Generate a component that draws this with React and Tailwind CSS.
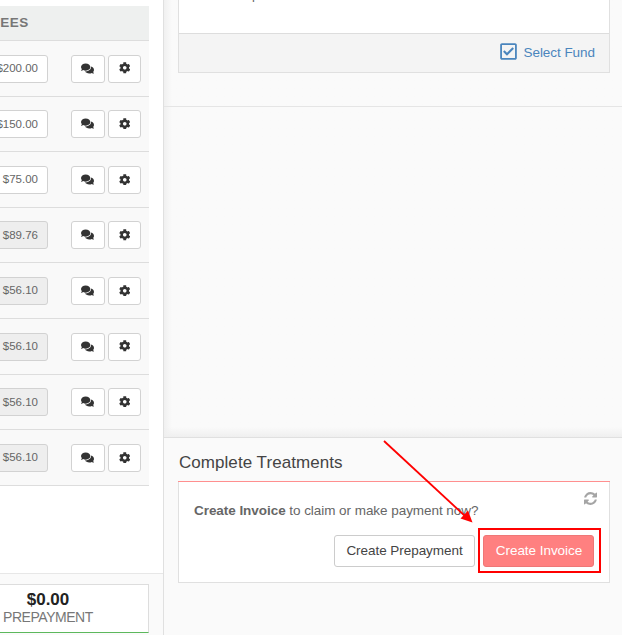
import { FaComments, FaCog, FaRegCheckSquare } from "react-icons/fa";

const fees = [
  { amount: "$200.00", locked: false },
  { amount: "$150.00", locked: false },
  { amount: "$75.00", locked: false },
  { amount: "$89.76", locked: true },
  { amount: "$56.10", locked: true },
  { amount: "$56.10", locked: true },
  { amount: "$56.10", locked: true },
  { amount: "$56.10", locked: true },
];

function FeeRow({ amount, locked }) {
  return (
    <div className="flex h-[55.6px] items-center border-b border-[#dddddd] bg-[#f9f9f9] pt-[0.7px]">
      <div
        className={`flex h-7 w-[58px] -ml-2.5 shrink-0 items-center justify-end rounded-[3px] border border-[#d2d2d2] pr-[9px] text-[11.5px] text-[#666666] ${locked ? "bg-[#eeeeee]" : "bg-white"}`}
      >
        {amount}
      </div>
      <button className="ml-[23px] flex h-[28px] w-[34px] shrink-0 items-center justify-center rounded-[3px] border border-[#d2d2d2] bg-white pb-px pr-px text-[#333333]">
        <FaComments className="size-[13px]" />
      </button>
      <button className="ml-[3px] flex h-[28px] w-[33px] shrink-0 items-center justify-center rounded-[3px] border border-[#d2d2d2] bg-white pb-px text-[#333333]">
        <FaCog className="size-[11.5px]" />
      </button>
    </div>
  );
}

function RefreshIcon({ className }) {
  return (
    <svg className={className} viewBox="0 0 1536 1536" fill="currentColor">
      <path d="M1511 928q0 5-1 7-64 268-268 434.5t-478 166.5q-146 0-282.500-55t-243.500-157l-129 129q-19 19-45 19t-45-19-19-45v-448q0-26 19-45t45-19h448q26 0 45 19t19 45-19 45l-137 137q71 66 161 102t187 36q134 0 250-65t186-179q11-17 53-117 8-23 30-23h192q13 0 22.500 9.500t9.500 22.500zm25-800v448q0 26-19 45t-45 19h-448q-26 0-45-19t-19-45 19-45l138-138q-148-137-349-137-134 0-250 65t-186 179q-11 17-53 117-8 23-30 23h-199q-13 0-22.500-9.500t-9.500-22.500v-7q65-268 270-434.500t480-166.500q146 0 284 55.500t245 156.500l130-129q19-19 45-19t45 19 19 45z" />
    </svg>
  );
}

export default function App() {
  return (
    <div className="relative flex h-[635px] w-[622px] overflow-hidden bg-[#fafafa] font-['Liberation_Sans',Arial,sans-serif]">
      <div className="flex w-[163px] shrink-0 flex-col bg-white pt-1.5">
        <div className="w-[149px]">
          <div className="flex h-[35px] items-center overflow-hidden border-b border-[#dddddd] bg-[#eef0ef]">
            <span className="-ml-[8.5px] text-[13.5px] font-bold tracking-[0.5px] text-[#777777]">FEES</span>
          </div>
          {fees.map((fee, i) => (
            <FeeRow key={i} {...fee} />
          ))}
        </div>
        <div className="mt-auto h-[62px] border-t border-[#e7e7e7] bg-[#fafafa] pt-2.5">
          <div className="flex h-[49px] w-[149px] flex-col border-r border-t border-b border-t-[#dddddd] border-r-[#dddddd] border-b-[#5cb85c] bg-white pt-[5px]">
            <div className="w-24 text-center text-[17px] font-bold leading-[19px] text-[#222222]">$0.00</div>
            <div className="pl-[3px] text-[14px] leading-[17px] tracking-[-0.45px] text-[#777777]">PREPAYMENT</div>
          </div>
        </div>
      </div>

      <div className="flex flex-1 flex-col border-l border-[#e0e0e0]">
        <div className="flex h-[437px] flex-col bg-linear-to-r from-[#f0f0f0] to-[#fafafa] to-[8px]">
          <div className="h-[107px] border-b border-[#e5e5e5]">
            <div className="ml-3.5 flex h-[73px] w-[432px] flex-col border-x border-b border-[#e0e0e0] bg-white">
              <div className="relative h-[33px] overflow-hidden text-[13px] text-[#666666]">
                <span className="absolute left-[73px] -top-[13px] leading-[15px]">p</span>
              </div>
              <div className="flex h-[39px] items-center justify-end border-t border-[#dddddd] bg-[#f4f4f4] pr-[14px] text-[#4a85bd]">
                <FaRegCheckSquare className="mb-[3px] mr-[6px] size-[19px]" />
                <span className="text-[13.5px] tracking-[-0.05px]">Select Fund</span>
              </div>
            </div>
          </div>
          <div className="mt-auto h-2.5 bg-linear-to-b from-transparent to-[#efefef]" />
        </div>
        <div className="flex-1 border-t border-[#e0e0e0] bg-[#fafafa] pl-3.5 pt-[14px]">
          <h2 className="h-[29px] pl-px text-[17px] leading-[22px] tracking-[0.05px] text-[#444444]">Complete Treatments</h2>
          <div className="w-[432px]">
            <div className="h-px bg-[#ff8f8f]" />
            <div className="h-[101px] border-x border-b border-[#e0e0e0] bg-white">
              <div className="flex h-[53px] justify-between pl-[15px] pr-3">
                <p className="whitespace-nowrap pt-5 text-[13.5px] leading-[17px] tracking-[-0.05px] text-[#666666]">
                  <b>Create Invoice</b> to claim or make payment now?
                </p>
                <RefreshIcon className="mt-[10px] size-[13px] text-[#a5a5a5]" />
              </div>
              <div className="flex justify-end gap-2 pr-[15px]">
                <button className="h-8 w-[141px] rounded-[3px] border border-[#cccccc] bg-white pt-px text-[13.5px] tracking-[-0.05px] text-[#444444]">
                  Create Prepayment
                </button>
                <button className="h-8 w-[111px] rounded-[3px] border border-[#ee7777] bg-[#ff8080] pl-px pt-px text-[13.5px] tracking-[-0.05px] text-white">
                  Create Invoice
                </button>
              </div>
            </div>
          </div>
        </div>
      </div>

      <div className="pointer-events-none absolute left-[478px] top-[528px] h-[45px] w-[123px] border-2 border-[#ff0000]" />
      <svg className="pointer-events-none absolute inset-0 h-full w-full" viewBox="0 0 622 635">
        <path d="M384 441L465 516" stroke="#ff0000" strokeWidth="1.8" />
        <path d="M472.5 522.5L460.5 518.5L468 510.5Z" fill="#ff0000" />
      </svg>
    </div>
  );
}
